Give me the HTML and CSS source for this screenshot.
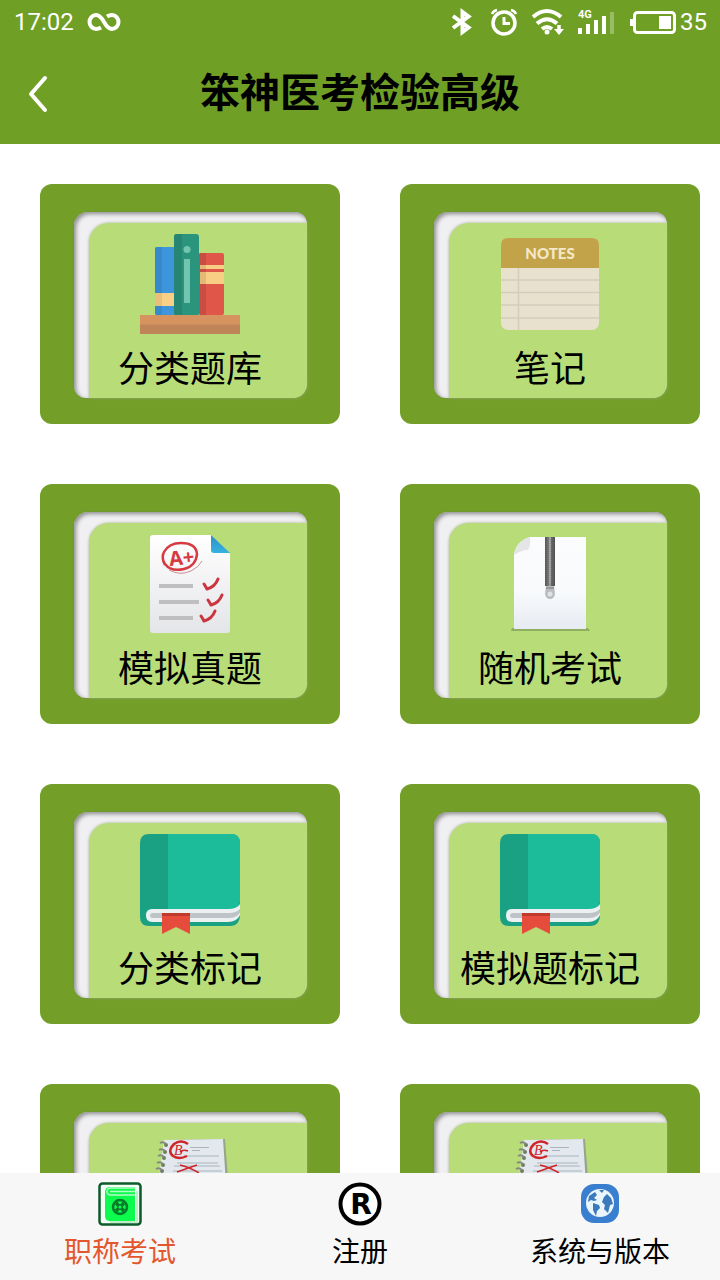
FILE: index.html
```html
<!DOCTYPE html>
<html lang="zh-CN">
<head>
<meta charset="utf-8">
<meta name="viewport" content="width=device-width, initial-scale=1">
<title>笨神医考检验高级</title>
<link rel="stylesheet" href="styles.css">
</head>
<body>
<svg class="defs" width="0" height="0" aria-hidden="true">
  <defs>
    <linearGradient id="paper" x1="0" y1="0" x2="0" y2="1"><stop offset="0" stop-color="#fff"/><stop offset="1" stop-color="#e4e5e8"/></linearGradient>
    <linearGradient id="fold" x1="0" y1="0" x2="0" y2="1"><stop offset="0" stop-color="#2b8fc4"/><stop offset="1" stop-color="#35b2e0"/></linearGradient>
    <linearGradient id="sheet" x1="0" y1="0" x2="0" y2="1"><stop offset="0" stop-color="#fbfcfc"/><stop offset=".6" stop-color="#f8fafc"/><stop offset="1" stop-color="#e6ebf2"/></linearGradient>
    <linearGradient id="zip" x1="0" y1="0" x2="1" y2="0"><stop offset="0" stop-color="#555"/><stop offset=".35" stop-color="#777"/><stop offset=".5" stop-color="#aaa"/><stop offset=".65" stop-color="#666"/><stop offset="1" stop-color="#505050"/></linearGradient>
    <linearGradient id="shelf" x1="0" y1="0" x2="0" y2="1"><stop offset=".48" stop-color="#d6935f"/><stop offset=".52" stop-color="#c08459"/></linearGradient>
    <symbol id="book" viewBox="0 0 100 100">
      <path d="M9 0H91Q100 0 100 9V80Q100 92 90 92H9Q0 92 0 83V9Q0 0 9 0Z" fill="#1aa083"/>
      <path d="M28 0H91Q100 0 100 9V68Q98 76 88 76H28Z" fill="#1cbc9b"/>
      <path d="M12 75H88Q97 75 100 70V81Q97 88 88 88H12Q6 88 6 81.500T12 75Z" fill="#ecf0f1"/>
      <path d="M13 79H89Q96 79 100 75V79Q96 84 89 84H13Q10 84 10 81.500T13 79Z" fill="#bdc3c7"/>
      <path d="M22 79H50V100L36 93L22 100Z" fill="#e64c3c"/>
      <path d="M22 79H50V82H22Z" fill="#c0392b"/>
    </symbol>
    <symbol id="exam" viewBox="0 0 100 100">
      <path d="M26 6L85 5L92 96L10 98Z" fill="#98a58a"/>
      <path d="M24 6L83 5L89 95L12 96Z" fill="#e2e8ee"/>
      <g fill="#6f7d60"><circle cx="26" cy="11" r="2"/><circle cx="25" cy="18" r="2"/><circle cx="24" cy="24" r="2"/><circle cx="23" cy="31" r="2"/><circle cx="22" cy="37" r="2"/></g>
      <path d="M20 9q3-2 6 1M19 16q3-2 6 1M18 22q3-2 6 1M17 29q3-2 6 1M16 35q3-2 6 1" fill="none" stroke="#85897f" stroke-width="2"/>
      <path d="M50 13.500h19M52 16.500h8M44 22h35M37 29h41M34 32h46M33 37h49" stroke="#a9b4be" stroke-width="1"/>
      <path d="M48 10Q41 5 34 10Q27 17 33 22Q39 26 47 22" fill="none" stroke="#cf2429" stroke-width="2.500"/>
      <text class="grade-b" x="34" y="21">B</text>
      <path d="M40 18Q43 15 48 17M40 31Q49 33 59 39M37 38L57 31" stroke="#cf2429" stroke-width="1.500" fill="none"/>
    </symbol>
  </defs>
</svg>

<header class="top">
  <div class="status">
    <span>17:02</span>
    <svg width="34" height="20" viewBox="0 0 34 20" fill="none" stroke="#fff" stroke-width="4"><path d="M14 15.500Q11.500 17 9 17A6.500 7 0 0 1 9 3Q13 3 17 10T25 17A6.500 7 0 0 0 25 3Q22.500 3 20 4.500"/></svg>
    <div class="status-right">
      <svg width="26" height="28" viewBox="0 0 26 28" fill="none" stroke="#fff" stroke-width="4"><path d="M3 8L18.500 19.500L12.500 24V4L18.500 8.500L3 20"/></svg>
      <svg width="28" height="28" viewBox="0 0 28 28" fill="none" stroke="#fff"><circle cx="14" cy="15" r="11" stroke-width="3.500"/><path d="M14 9V15.500H20" stroke-width="3"/><path d="M2 6Q3 3 7 2M21 2Q25 3 26 6" stroke-width="2.500"/></svg>
      <svg width="32" height="28" viewBox="0 0 32 28" fill="none" stroke="#fff" stroke-width="4"><path d="M1 9Q15-3 29 9M5 15.500Q15 7 25 15.500M10 21Q15 17 20 21"/><circle cx="15" cy="24" r="2.500" fill="#fff" stroke="none"/><path d="M27 17V22" stroke-width="3.500"/><path d="M22 21H32L27 27Z" fill="#fff" stroke="none"/></svg>
      <svg width="38" height="28" viewBox="0 0 38 28" fill="#fff"><text class="net" x="0" y="10">4G</text><path d="M0 20h4v6H0zM8 16h4v10H8zM16 12h4v14h-4zM24 8h4v18h-4z"/><path d="M32 4h4v22h-4z" opacity=".3"/></svg>
      <span class="battery"><svg width="46" height="28" viewBox="0 0 46 28"><rect x="4.500" y="4.500" width="40" height="20" rx="3" fill="none" stroke="#fff" stroke-width="3"/><path d="M0 11h3v7H0zM29 8h12v13H29z" fill="#fff"/></svg>35</span>
    </div>
  </div>
  <div class="titlebar">
    <button class="back" type="button"><svg width="20" height="38" viewBox="0 0 20 38" fill="none" stroke="#fff" stroke-width="4" stroke-linecap="round" stroke-linejoin="round"><path d="M17 3L3 19L17 35"/></svg></button>
    <h1>笨神医考检验高级</h1>
  </div>
</header>

<main class="grid">
  <button class="card" type="button"><span class="tray"><span class="panel">
    <svg class="pic" viewBox="0 0 100 100">
      <rect x="15" y="13" width="20" height="68" rx="2" fill="#3d95dc"/><path d="M17 13h5v68h-5q-2 0-2-2V15q0-2 2-2z" fill="#3789cb"/>
      <path d="M15 59h20v13H15z" fill="#fad087"/><path d="M15 59h7v13h-7z" fill="#eabf7b"/>
      <rect x="59" y="19" width="25" height="62" rx="2" fill="#e05648"/><path d="M61 19h5v62h-5q-2 0-2-2V21q0-2 2-2z" fill="#c94d43"/>
      <path d="M60 31h24v4H60zM60 38h24v12H60z" fill="#f8ce85"/><path d="M60 31h6v4h-6zM60 38h6v12h-6z" fill="#e5b873"/>
      <rect x="34" y="0" width="25" height="82" rx="3" fill="#2b947d"/><path d="M37 0h5v82h-5q-3 0-3-3V3q0-3 3-3z" fill="#268573"/>
      <path d="M44 25h6v44h-6z" fill="#74c5b0"/><circle cx="47" cy="15.500" r="3.500" fill="#74c5b0"/>
      <rect y="81" width="100" height="19" fill="url(#shelf)"/>
    </svg>
    <span class="label">分类题库</span></span></span></button>

  <button class="card" type="button"><span class="tray"><span class="panel">
    <svg class="pic" viewBox="0 0 100 100">
      <rect x="1" y="4" width="98" height="92" rx="7" fill="#e8e1ce"/>
      <path d="M1 34V11Q1 4 8 4H92Q99 4 99 11V34Z" fill="#c3a349"/>
      <path d="M1 46H99M1 58.500H99M1 71H99M1 84H99M18.500 34V96" stroke="#d5cdbc" stroke-width="1.500"/>
      <text class="notes" x="50" y="25" text-anchor="middle">NOTES</text>
    </svg>
    <span class="label">笔记</span></span></span></button>

  <button class="card" type="button"><span class="tray"><span class="panel">
    <svg class="pic" viewBox="0 0 100 100">
      <path d="M13 1H71L90 20V96Q90 99 87 99H13Q10 99 10 96V4Q10 1 13 1Z" fill="url(#paper)"/>
      <path d="M71 1L90 19H74Q71 19 71 16Z" fill="url(#fold)"/>
      <path d="M19 52H53M19 68H59M19 84H53" stroke="#bfbfc1" stroke-width="4"/>
      <path d="M25 31Q21 24 24 18Q29 9 41 9Q56 9 57 20Q56 32 44 35Q31 38 25 30Q22 26 23 20" fill="none" stroke="#d63a40" stroke-width="2.500"/>
      <path d="M29 36Q40 42 51 37Q59 33 62 27" fill="none" stroke="#c98f93" stroke-width="1"/>
      <text class="grade-a" x="29" y="31" transform="rotate(-6 40 25)">A+</text>
      <path d="M64 50Q66 53 67 55Q75 53 78 45M68 66Q70 69 71 71Q79 69 82 61M61 82Q63 85 64 87Q72 85 75 77" fill="none" stroke="#cb3540" stroke-width="3" stroke-linecap="round" stroke-linejoin="round"/>
    </svg>
    <span class="label">模拟真题</span></span></span></button>

  <button class="card" type="button"><span class="tray"><span class="panel">
    <svg class="pic" viewBox="0 0 100 100">
      <path d="M12 94H88L90 97H11Z" fill="#8fae61"/>
      <path d="M30 3H86V95H14V21Q16 7 30 3Z" fill="url(#sheet)"/>
      <path d="M14 21Q16 7 30 3Q31 11 28 16Q22 16 14 21Z" fill="#e3e5e6"/>
      <path d="M45 3H55V52H45Z" fill="url(#zip)"/><path d="M50 4V50" stroke="#bbb" stroke-width="1" stroke-dasharray="1 1"/>
      <path d="M46 52H54L55 60Q54 65 50 65T45 60Z" fill="#b8bcc0"/><circle cx="50" cy="60" r="2.500" fill="#dfe2e4"/><path d="M46 54H54" stroke="#999" stroke-width="2"/>
    </svg>
    <span class="label">随机考试</span></span></span></button>

  <button class="card" type="button"><span class="tray"><span class="panel"><svg class="pic"><use href="#book"/></svg><span class="label">分类标记</span></span></span></button>
  <button class="card" type="button"><span class="tray"><span class="panel"><svg class="pic"><use href="#book"/></svg><span class="label">模拟题标记</span></span></span></button>
  <button class="card" type="button"><span class="tray"><span class="panel"><svg class="pic"><use href="#exam"/></svg></span></span></button>
  <button class="card" type="button"><span class="tray"><span class="panel"><svg class="pic"><use href="#exam"/></svg></span></span></button>
</main>

<nav class="tabs">
  <a class="tab active" href="#exam-tab">
    <svg width="44" height="44" viewBox="0 0 44 44"><rect x="1.500" y="1.500" width="41" height="41" rx="3" fill="#f2fff4" stroke="#0d5a2a" stroke-width="2.500"/><path d="M12 5H37V39H12Q7 39 7 34V10Q7 5 12 5Z" fill="#0cfb4c"/><path d="M37 6H13Q9 6 9 9.500T13 13H37" fill="none" stroke="#b4fcc6" stroke-width="1.500"/><path d="M12 9.500H37" stroke="#b4fcc6" stroke-width="1.500"/><path d="M39 9V40H12" fill="none" stroke="#bdeec8" stroke-width="2"/><circle cx="22" cy="25" r="7" fill="none" stroke="#087a2c" stroke-width="2.500"/><path d="M18 21L26 29M26 21L18 29" stroke="#087a2c" stroke-width="3.500"/><circle cx="22" cy="25" r="1.500" fill="#0cfb4c"/></svg>
    <span>职称考试</span></a>
  <a class="tab" href="#register">
    <svg width="44" height="44" viewBox="0 0 44 44"><circle cx="22" cy="22" r="19.500" fill="#fff" stroke="#000" stroke-width="4"/><text class="reg" x="23" y="32" text-anchor="middle">R</text></svg>
    <span>注册</span></a>
  <a class="tab" href="#system">
    <svg width="44" height="44" viewBox="0 0 44 44"><rect x="3" y="2" width="38" height="39" rx="13" fill="#3a7fcf"/><circle cx="22" cy="21" r="14" fill="#e9f4fb"/><path d="M11 14L17 10L19 13L16 16L19 18L16 19L13 18L10 20ZM15 21L21 23L22 26L19 29L18 34L15 28ZM26 15L29 12L33 16L35 22L32 23L30 31L26 27L27 23L24 20ZM21 8L26 8L24 11Z" fill="#3a7aba"/></svg>
    <span>系统与版本</span></a>
</nav>
</body>
</html>
```
FILE: styles.css
```css
* { box-sizing: border-box; }

body {
  margin: 0;
  height: 100vh;
  display: flex;
  flex-direction: column;
  background: #fff;
  color: #000;
  font-family: "Noto Sans CJK SC", sans-serif;
}

svg { display: block; flex: none; }
.defs { position: absolute; }

button {
  border: 0;
  padding: 0;
  background: none;
  color: inherit;
  font: inherit;
}

.top { flex: none; background: #709f26; }

.status {
  height: 44px;
  padding: 0 13px 0 14px;
  display: flex;
  align-items: center;
  gap: 13px;
  color: #fff;
  font: 24px/28px Roboto, sans-serif;
}

.status-right {
  margin-left: auto;
  display: flex;
  align-items: center;
  gap: 14px;
}

.battery { display: flex; align-items: center; gap: 4px; }
.net { font: bold 11px Roboto, sans-serif; }

.titlebar {
  height: 100px;
  padding: 0 28px;
  display: grid;
  grid-template-columns: 20px 1fr 20px;
  align-items: center;
}

h1 {
  margin: 0;
  padding-bottom: 8px;
  font-size: 40px;
  line-height: 56px;
  font-weight: 700;
  text-align: center;
}

.grid {
  flex: 1;
  min-height: 0;
  overflow-y: auto;
  scrollbar-width: none;
  padding: 40px 20px 40px 40px;
  display: grid;
  grid-template-columns: 1fr 1fr;
  grid-auto-rows: 240px;
  gap: 60px;
}

.card {
  display: flex;
  padding: 28px 33px 26px 34px;
  border-radius: 12px;
  background: #739f28;
}

.tray {
  flex: 1;
  align-self: stretch;
  display: flex;
  padding: 11px 0 0 15px;
  border-radius: 14px 12px 16px 12px;
  background: #f0eff1;
  box-shadow: inset 2px 2px 4px #8c8c90, 0 0 2px #6b8a35;
}

.panel {
  flex: 1;
  display: flex;
  flex-direction: column;
  align-items: center;
  gap: 12px;
  padding: 11px 16px 0 0;
  border-radius: 20px 0 14px 0;
  background: #b8dd78;
  box-shadow: 0 0 3px #9fae88;
}

.pic { width: 100px; height: 100px; }

.label { font-size: 36px; line-height: 40px; white-space: nowrap; }

.notes { font: 900 15px Lato, sans-serif; fill: #f3e8c8; }
.grade-a { font: bold 20px "Open Sans", sans-serif; fill: #d63a40; }
.grade-b { font: italic 14px "Liberation Serif", serif; fill: #cf2429; }
.reg { font: bold 28px "DejaVu Sans", sans-serif; }

.tabs {
  flex: none;
  display: grid;
  grid-template-columns: repeat(3, 1fr);
  height: 107px;
  padding-top: 9px;
  background: #f7f7f7;
}

.tab {
  display: flex;
  flex-direction: column;
  align-items: center;
  gap: 4px;
  color: #000;
  font-size: 28px;
  line-height: 40px;
  text-decoration: none;
}

.tab.active { color: #e4572e; }
```
